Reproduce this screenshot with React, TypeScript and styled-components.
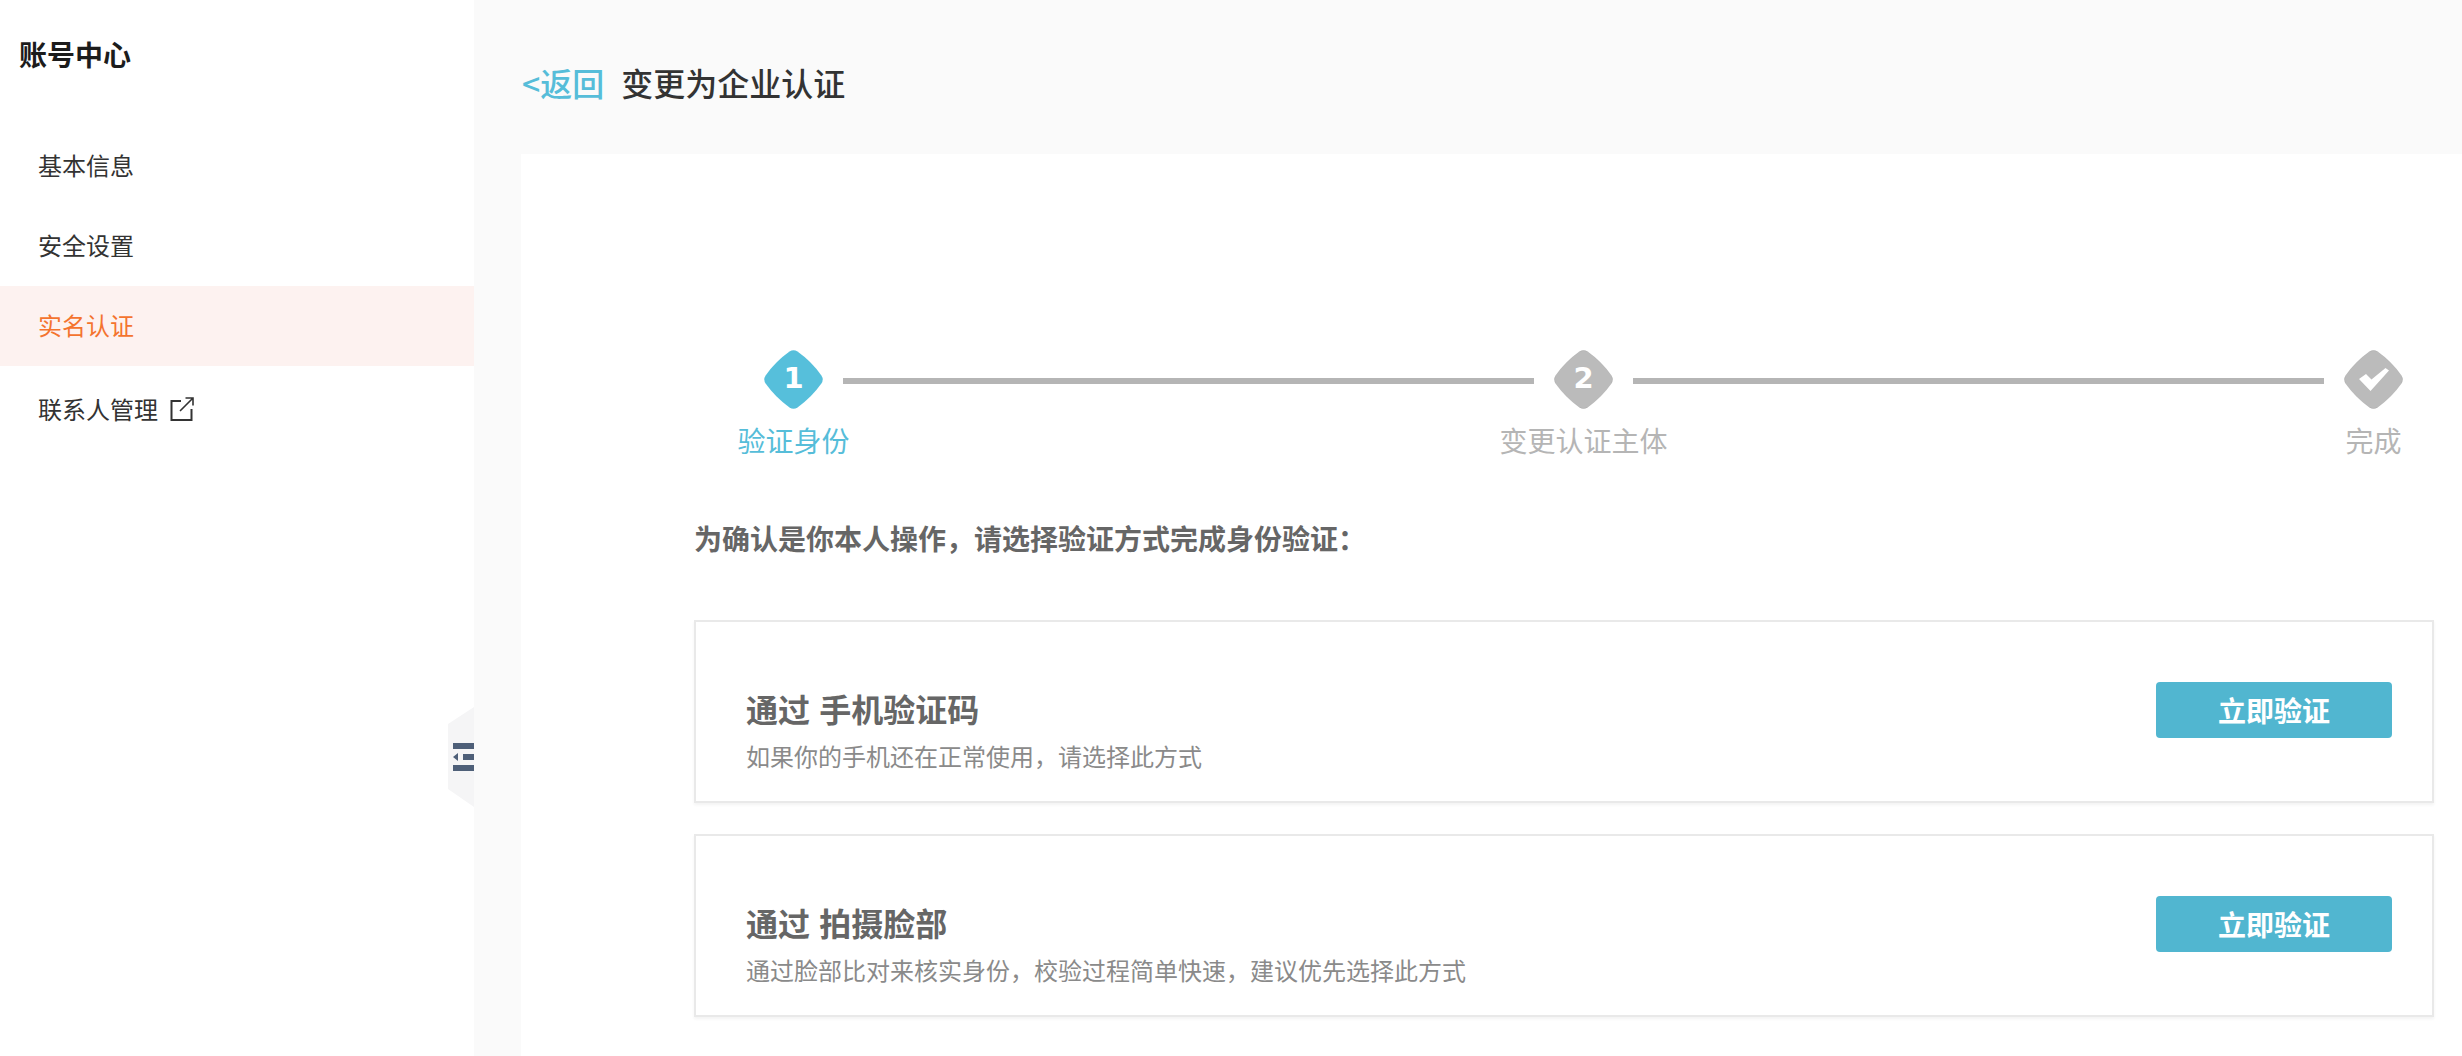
import React from "react";
import styled, { createGlobalStyle } from "styled-components";

const Global = createGlobalStyle`
  html, body { margin: 0; padding: 0; height: 100%; background: #fafafa; }
  body { font-family: "Noto Sans CJK SC", "Noto Sans", sans-serif; overflow: hidden; }
  * { box-sizing: border-box; }
`;

const Page = styled.div`
  display: flex;
  height: 1056px;
  background: #fafafa;
`;

const Sidebar = styled.aside`
  position: relative;
  flex: 0 0 474px;
  background: #fff;
`;

const SideTitle = styled.div`
  height: 126px;
  padding: 34px 0 0 19px;
  font-size: 28px;
  line-height: 40px;
  font-weight: 700;
  color: #1c1c1c;
`;

const NavItem = styled.div<{ $active?: boolean }>`
  display: flex;
  align-items: center;
  gap: 12px;
  height: 80px;
  padding: 0 0 3px 38px;
  font-size: 24px;
  color: ${(p) => (p.$active ? "#f4742f" : "#333")};
  background: ${(p) => (p.$active ? "#fdf2f0" : "transparent")};
`;

const NavLast = styled(NavItem)`
  padding-top: 5px;
  padding-bottom: 0;
`;

const Collapse = styled.div`
  position: absolute;
  top: 707px;
  right: 0;
  width: 26px;
  height: 100px;
  display: flex;
  align-items: center;
  justify-content: flex-end;
  background: #f5f5f6;
  clip-path: polygon(0 17%, 100% 0, 100% 100%, 0 82%);
`;

const Main = styled.main`
  flex: 1;
  min-width: 0;
  display: flex;
  flex-direction: column;
`;

const Header = styled.header`
  flex: 0 0 154px;
  display: flex;
  align-items: center;
  gap: 17px;
  padding: 10px 0 0 48px;
`;

const Back = styled.span`
  font-size: 32px;
  line-height: 44px;
  font-weight: 500;
  color: #56bdd9;
`;

const PageTitle = styled.h1`
  margin: 0;
  font-size: 32px;
  line-height: 44px;
  font-weight: 500;
  color: #333;
`;

const Panel = styled.section`
  flex: 1;
  margin-left: 47px;
  padding: 196px 28px 0 173px;
  background: #fff;
`;

const Stepper = styled.div`
  display: flex;
  align-items: flex-start;
  margin-left: 70px;
`;

const Step = styled.div`
  flex: 0 0 59px;
  min-width: 0;
  display: flex;
  flex-direction: column;
  align-items: center;
`;

const Diamond = styled.div`
  position: relative;
  flex: 0 0 59px;
  width: 59px;
  height: 59px;
  display: flex;
  align-items: center;
  justify-content: center;
`;

const DiamondShape = styled.svg`
  position: absolute;
  inset: 0;
  width: 59px;
  height: 59px;
`;

const Digit = styled.span`
  position: relative;
  top: -1px;
  font-family: "DejaVu Sans", sans-serif;
  font-weight: 700;
  font-size: 29px;
  line-height: 1;
  color: #fff;
`;

const CheckMark = styled.svg`
  position: relative;
  width: 30px;
  height: 23px;
`;

const StepLabel = styled.div<{ $active?: boolean }>`
  margin-top: 11px;
  font-size: 28px;
  line-height: 40px;
  white-space: nowrap;
  color: ${(p) => (p.$active ? "#56bdd9" : "#b5b5b5")};
`;

const Line = styled.div`
  flex: 0 0 691px;
  height: 6px;
  margin: 28px 20px 0;
  background: #b5b5b5;
`;

const Prompt = styled.p`
  margin: 58px 0 62px;
  font-size: 28px;
  line-height: 40px;
  font-weight: 700;
  color: #666;
`;

const Card = styled.div`
  display: flex;
  justify-content: space-between;
  align-items: flex-start;
  height: 183px;
  padding: 60px 40px 0 50px;
  border: 2px solid #e9e9e9;
  box-shadow: 0 2px 3px rgba(0, 0, 0, 0.05);
  & + & {
    margin-top: 31px;
  }
`;

const CardText = styled.div`
  padding-top: 6px;
`;

const CardTitle = styled.div`
  font-size: 32px;
  line-height: 40px;
  font-weight: 700;
  color: #666;
  white-space: pre;
  word-spacing: 2px;
`;

const CardDesc = styled.div`
  margin-top: 10px;
  font-size: 24px;
  line-height: 36px;
  color: #8a8a8a;
`;

const VerifyButton = styled.button`
  flex: 0 0 236px;
  height: 56px;
  padding: 0;
  border: 0;
  border-radius: 4px;
  background: #51b6d0;
  color: #fff;
  font-family: inherit;
  font-size: 28px;
  font-weight: 700;
`;

const methods = [
  { title: "通过 手机验证码", desc: "如果你的手机还在正常使用，请选择此方式" },
  { title: "通过 拍摄脸部", desc: "通过脸部比对来核实身份，校验过程简单快速，建议优先选择此方式" },
];

const diamondPath =
  "M25.5 1.6Q29.5-1 33.5 1.6Q47.5 11.5 57.4 25.5Q60 29.5 57.4 33.5Q47.5 47.5 33.5 57.4Q29.5 60 25.5 57.4Q11.5 47.5 1.6 33.5Q-1 29.5 1.6 25.5Q11.5 11.5 25.5 1.6Z";

function Shape({ active }: { active?: boolean }) {
  return (
    <DiamondShape viewBox="0 0 59 59">
      <path
        d={diamondPath}
        fill={active ? "#56bfdb" : "#bbbbbb"}
        stroke={active ? "none" : "rgba(0,0,0,.05)"}
      />
    </DiamondShape>
  );
}

export default function App() {
  return (
    <Page>
      <Global />
      <Sidebar>
        <SideTitle>账号中心</SideTitle>
        <NavItem>基本信息</NavItem>
        <NavItem>安全设置</NavItem>
        <NavItem $active>实名认证</NavItem>
        <NavLast>
          联系人管理
          <svg width="24" height="24" viewBox="0 0 24 24" fill="none" stroke="#333" strokeWidth="2">
            <path d="M11 4H1.5v19h20V12" />
            <path d="M10 14L22.5 1.5M15.5 1h7.5v7.5" strokeWidth="1.6" />
          </svg>
        </NavLast>
        <Collapse>
          <svg width="21" height="28" viewBox="0 0 21 28">
            <path d="M0 0h21v6H0zM0 22h21v6H0zM10 11h11v6H10z" fill="#4e5f78" />
            <path d="M0 14l5-4v8z" fill="#4e5f78" />
          </svg>
        </Collapse>
      </Sidebar>
      <Main>
        <Header>
          <Back>&lt;返回</Back>
          <PageTitle>变更为企业认证</PageTitle>
        </Header>
        <Panel>
          <Stepper>
            <Step>
              <Diamond>
                <Shape active />
                <Digit>1</Digit>
              </Diamond>
              <StepLabel $active>验证身份</StepLabel>
            </Step>
            <Line />
            <Step>
              <Diamond>
                <Shape />
                <Digit>2</Digit>
              </Diamond>
              <StepLabel>变更认证主体</StepLabel>
            </Step>
            <Line />
            <Step>
              <Diamond>
                <Shape />
                <CheckMark viewBox="0 0 30 23">
                  <path d="M0 11l7-5 5.5 5.5L26.5 0 30 2.5 11.5 23z" fill="#fff" />
                </CheckMark>
              </Diamond>
              <StepLabel>完成</StepLabel>
            </Step>
          </Stepper>
          <Prompt>为确认是你本人操作，请选择验证方式完成身份验证：</Prompt>
          {methods.map((m) => (
            <Card key={m.title}>
              <CardText>
                <CardTitle>{m.title}</CardTitle>
                <CardDesc>{m.desc}</CardDesc>
              </CardText>
              <VerifyButton>立即验证</VerifyButton>
            </Card>
          ))}
        </Panel>
      </Main>
    </Page>
  );
}
